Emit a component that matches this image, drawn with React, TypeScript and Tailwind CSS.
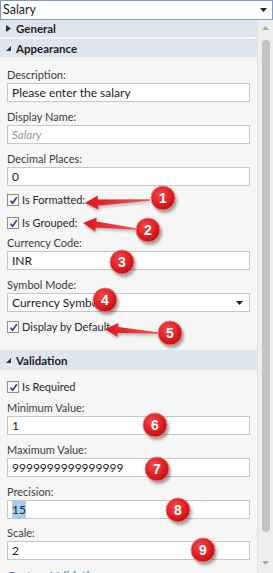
import React from "react";

type Badge = { n: number; x: number; y: number };
type Arrow = { tx: number; ty: number; hx: number; hy: number };

const badges: Badge[] = [
  { n: 1, x: 163, y: 198 },
  { n: 2, x: 148, y: 230 },
  { n: 3, x: 122, y: 262 },
  { n: 4, x: 105, y: 300 },
  { n: 5, x: 170, y: 333 },
  { n: 6, x: 155, y: 425 },
  { n: 7, x: 157, y: 469 },
  { n: 8, x: 178, y: 510 },
  { n: 9, x: 203, y: 550 },
];

const arrows: Arrow[] = [
  { tx: 150, ty: 200, hx: 85, hy: 203 },
  { tx: 136, ty: 229, hx: 83, hy: 223 },
  { tx: 158, ty: 333, hx: 105, hy: 329 },
];

// tapered snagit-style arrow, thin at the tail, wide at the head
function arrowPoints(a: Arrow) {
  const dx = a.hx - a.tx;
  const dy = a.hy - a.ty;
  const len = Math.sqrt(dx * dx + dy * dy);
  const ux = dx / len;
  const uy = dy / len;
  const px = -uy;
  const py = ux;
  const bx = a.hx - ux * 13;
  const by = a.hy - uy * 13;
  const pts = [
    [a.tx + px * 0.8, a.ty + py * 0.8],
    [bx + px * 3, by + py * 3],
    [bx + px * 7, by + py * 7],
    [a.hx, a.hy],
    [bx - px * 7, by - py * 7],
    [bx - px * 3, by - py * 3],
    [a.tx - px * 0.8, a.ty - py * 0.8],
  ];
  return pts.map((p) => `${p[0].toFixed(1)},${p[1].toFixed(1)}`).join(" ");
}

const Header = ({ title, open }: { title: string; open: boolean }) => (
  <div className="h-[18px] bg-[#dfe5ee] flex items-center pl-[6px] gap-[5px] font-bold text-[11.5px] text-[#1e1e1e]">
    {open ? (
      <svg width="5" height="5" viewBox="0 0 5 5">
        <polygon points="5,0 5,5 0,5" fill="#333" />
      </svg>
    ) : (
      <svg width="5" height="7" viewBox="0 0 5 7">
        <polygon points="0,0 5,3.5 0,7" fill="#333" />
      </svg>
    )}
    <span>{title}</span>
  </div>
);

const Label = ({ text, className = "" }: { text: string; className?: string }) => (
  <div className={`h-[16px] leading-[16px] text-[11px] text-[#3c3c3c] px-[7px] ${className}`}>{text}</div>
);

const Field = ({ value, placeholder, selected }: { value?: string; placeholder?: string; selected?: boolean }) => (
  <div className="mx-[7px] h-[19px] border border-[#c6c6c6] bg-white flex items-center px-[4px] text-[12px] text-[#222]">
    {placeholder ? (
      <span className="italic text-[#9a9a9a] text-[11.5px]">{placeholder}</span>
    ) : selected ? (
      <span className="bg-[#a6cdf0]">{value}</span>
    ) : (
      <span>{value}</span>
    )}
  </div>
);

const Check = ({ text, className = "" }: { text: string; className?: string }) => (
  <div className={`h-[16px] flex items-center pl-[7px] gap-[3px] text-[11px] text-[#2a2a2a] ${className}`}>
    <div className="w-[12px] h-[12px] border border-[#8f8f8f] bg-gradient-to-b from-[#f4f4f4] to-[#ffffff] flex items-center justify-center">
      <svg width="9" height="9" viewBox="0 0 9 9">
        <path d="M1.5 4.8 L3.6 7.2 L7.8 1.2" stroke="#2b3c92" strokeWidth="1.6" fill="none" />
      </svg>
    </div>
    <span>{text}</span>
  </div>
);

export default function App() {
  return (
    <div className="relative w-[273px] h-[573px] overflow-hidden bg-[#f6f6f6] font-['Lato',sans-serif]">
      {/* Top object selector */}
      <div className="h-[20px] bg-white border border-[#7f9cc2] flex items-center justify-between pl-[2px] pr-[5px] text-[12.5px] text-[#222]">
        <span>Salary</span>
        <svg width="7" height="4" viewBox="0 0 7 4">
          <polygon points="0,0 7,0 3.5,4" fill="#222" />
        </svg>
      </div>

      <div className="flex h-[553px]">
        {/* Property sheet */}
        <div className="w-[257px] flex flex-col">
          <Header title="General" open={false} />
          <div className="mt-[2px]">
            <Header title="Appearance" open={true} />
          </div>

          <Label text="Description:" className="mt-[10px]" />
          <Field value="Please enter the salary" />

          <Label text="Display Name:" className="mt-[7px]" />
          <Field placeholder="Salary" />

          <Label text="Decimal Places:" className="mt-[7px]" />
          <Field value="0" />

          <Check text="Is Formatted:" className="mt-[6px]" />
          <Check text="Is Grouped:" className="mt-[7px]" />

          <Label text="Currency Code:" className="mt-[4px]" />
          <Field value="INR" />

          <Label text="Symbol Mode:" className="mt-[7px]" />
          <div className="mx-[7px] h-[19px] border border-[#c6c6c6] bg-white flex items-center justify-between pl-[4px] pr-[6px] text-[12px] text-[#222]">
            <span>Currency Symbol</span>
            <svg width="7" height="4" viewBox="0 0 7 4">
              <polygon points="0,0 7,0 3.5,4" fill="#222" />
            </svg>
          </div>

          <Check text="Display by Default" className="mt-[7px]" />

          <div className="mt-[15px]">
            <div className="h-[20px] bg-[#dfe5ee] flex items-center pl-[6px] gap-[5px] font-bold text-[11.5px] text-[#1e1e1e]">
              <svg width="5" height="5" viewBox="0 0 5 5">
                <polygon points="5,0 5,5 0,5" fill="#333" />
              </svg>
              <span>Validation</span>
            </div>
          </div>

          <Check text="Is Required" className="mt-[9px]" />

          <Label text="Minimum Value:" className="mt-[5px]" />
          <Field value="1" />

          <Label text="Maximum Value:" className="mt-[7px]" />
          <Field value="9999999999999999" />

          <Label text="Precision:" className="mt-[7px]" />
          <Field value="15" selected />

          <Label text="Scale:" className="mt-[6px]" />
          <Field value="2" />

          <div className="mt-[8px] px-[7px] text-[12px] leading-[16px] text-[#1a6fc4]">Custom Validation</div>
        </div>

        {/* Scrollbar */}
        <div className="w-[16px] bg-[#eeeeee] border-l border-[#e2e2e2] flex flex-col items-center">
          <svg width="7" height="4" viewBox="0 0 7 4" className="mt-[6px]">
            <polygon points="3.5,0 7,4 0,4" fill="#a8a8a8" />
          </svg>
          <div className="mt-[10px] w-[8px] h-[492px] rounded-full bg-[#c3c3c6]" />
          <svg width="7" height="4" viewBox="0 0 7 4" className="mt-[29px]">
            <polygon points="0,0 7,0 3.5,4" fill="#a8a8a8" />
          </svg>
        </div>
      </div>

      {/* Callout annotations drawn over the sheet */}
      <svg className="absolute inset-0 pointer-events-none" width="273" height="573" viewBox="0 0 273 573">
        <defs>
          <radialGradient id="badgeFill" cx="40%" cy="35%" r="70%">
            <stop offset="0%" stopColor="#f44a4a" />
            <stop offset="70%" stopColor="#d9191c" />
            <stop offset="100%" stopColor="#b40f12" />
          </radialGradient>
          <linearGradient id="arrowFill" x1="0" y1="0" x2="1" y2="0">
            <stop offset="0%" stopColor="#e0141a" />
            <stop offset="100%" stopColor="#f35555" />
          </linearGradient>
          <filter id="soft" x="-50%" y="-50%" width="200%" height="200%">
            <feGaussianBlur stdDeviation="1.6" />
          </filter>
        </defs>
        {arrows.map((a, i) => (
          <g key={i}>
            <polygon points={arrowPoints({ tx: a.tx + 1, ty: a.ty + 2, hx: a.hx + 1, hy: a.hy + 2 })} fill="#000" opacity="0.25" filter="url(#soft)" />
            <polygon points={arrowPoints(a)} fill="url(#arrowFill)" />
          </g>
        ))}
        {badges.map((b) => (
          <g key={b.n}>
            <circle cx={b.x + 2} cy={b.y + 3} r="12" fill="#000" opacity="0.35" filter="url(#soft)" />
            <circle cx={b.x} cy={b.y} r="12" fill="url(#badgeFill)" stroke="#f07a7a" strokeWidth="1" />
            <text
              x={b.x}
              y={b.y + 5}
              textAnchor="middle"
              fill="#ffffff"
              fontSize="14"
              fontWeight="bold"
              fontFamily="'Liberation Sans', Arial, sans-serif"
            >
              {b.n}
            </text>
          </g>
        ))}
      </svg>
    </div>
  );
}
